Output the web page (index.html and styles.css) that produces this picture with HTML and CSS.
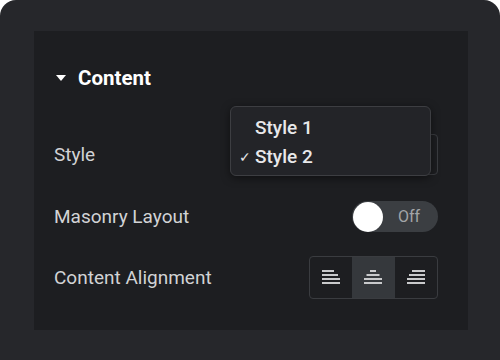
FILE: index.html
```html
<!DOCTYPE html>
<html lang="en">
<head>
  <meta charset="UTF-8" />
  <title>Content Settings</title>
  <link rel="stylesheet" href="styles.css">
</head>
<body>
  <div class="card">
    <div class="panel">

      <!-- Section header -->
      <div class="section-title">
        <span class="caret"></span>
        <span>Content</span>
      </div>

      <!-- Style select with open menu -->
      <div class="row row-style">
        <span class="label">Style</span>
        <div class="select">
          <div class="menu">
            <div class="menu-item"><span class="check"></span>Style 1</div>
            <div class="menu-item"><span class="check">&#10003;</span>Style 2</div>
          </div>
        </div>
      </div>

      <div class="row row-masonry">
        <span class="label">Masonry Layout</span>
        <div class="toggle">
          <span class="knob"></span>
          <span class="toggle-text">Off</span>
        </div>
      </div>

      <div class="row row-align">
        <span class="label">Content Alignment</span>
        <div class="btn-group">
          <div class="btn">
            <svg width="18" height="15" viewBox="0 0 18 15">
              <rect x="0" y="0" width="12" height="2" />
              <rect x="0" y="4" width="16" height="2" />
              <rect x="0" y="8" width="18" height="2" />
              <rect x="0" y="12" width="18" height="2" />
            </svg>
          </div>
          <div class="btn active">
            <svg width="18" height="15" viewBox="0 0 18 15">
              <rect x="6" y="0" width="6" height="2" />
              <rect x="2.5" y="4" width="13" height="2" />
              <rect x="0" y="8" width="18" height="2" />
              <rect x="0" y="12" width="18" height="2" />
            </svg>
          </div>
          <div class="btn">
            <svg width="18" height="15" viewBox="0 0 18 15">
              <rect x="5" y="0" width="13" height="2" />
              <rect x="2" y="4" width="16" height="2" />
              <rect x="0" y="8" width="18" height="2" />
              <rect x="0" y="12" width="18" height="2" />
            </svg>
          </div>
        </div>
      </div>

    </div>
  </div>
</body>
</html>
```

FILE: styles.css
```css
body {
  margin: 0;
  background: #ffffff;
  font-family: Roboto, "Liberation Sans", sans-serif;
}

.card {
  width: 500px;
  height: 360px;
  box-sizing: border-box;
  background: #26272b;
  border-radius: 16px 16px 0 0;
  padding: 31px 32px 0 34px;
}

.panel {
  width: 434px;
  height: 299px;
  box-sizing: border-box;
  background: #1d1e21;
  padding: 35px 30px 0 20px;
}

.section-title {
  display: flex;
  align-items: center;
  height: 24px;
  color: #ffffff;
  font-size: 20.5px;
  font-weight: 700;
  padding-left: 2px;
}

.caret {
  width: 0;
  height: 0;
  border-left: 5px solid transparent;
  border-right: 5px solid transparent;
  border-top: 6px solid #ffffff;
  margin-right: 12px;
}

.row {
  display: flex;
  align-items: center;
  justify-content: space-between;
}

.label {
  color: #d2d3d5;
  font-size: 19px;
}

.row-style {
  margin-top: 44px;
  height: 41px;
}

.row-masonry {
  margin-top: 26px;
  height: 31px;
}

.row-align {
  margin-top: 24px;
  height: 43px;
}

.select {
  position: relative;
  width: 129px;
  height: 41px;
  box-sizing: border-box;
  border: 1px solid #3a3c40;
  border-radius: 4px;
}

.menu {
  position: absolute;
  left: -80px;
  top: -29px;
  width: 201px;
  height: 70px;
  box-sizing: border-box;
  background: #232428;
  border: 1px solid #3d3e42;
  border-radius: 6px;
  box-shadow: 0 2px 8px rgba(0, 0, 0, 0.5);
  padding-top: 6px;
}

.menu-item {
  display: flex;
  align-items: center;
  height: 29px;
  color: #e8e8ea;
  font-size: 19px;
  font-weight: 500;
}

.check {
  width: 16px;
  padding-left: 8px;
  font-size: 14px;
  color: #e8e8ea;
}

.toggle {
  display: flex;
  align-items: center;
  width: 86px;
  height: 31px;
  box-sizing: border-box;
  background: #3b3e42;
  border-radius: 16px;
  padding-left: 1px;
}

.knob {
  width: 30px;
  height: 30px;
  border-radius: 50%;
  background: #ffffff;
}

.toggle-text {
  margin-left: 15px;
  color: #a3a5a8;
  font-size: 16px;
}

.btn-group {
  display: flex;
  width: 129px;
  height: 43px;
  box-sizing: border-box;
  border: 1px solid #3a3c40;
  border-radius: 4px;
  overflow: hidden;
}

.btn {
  flex: 1;
  display: flex;
  align-items: center;
  justify-content: center;
}

.btn.active {
  background: #35383c;
}

.btn svg {
  fill: #c9cacc;
}
```
